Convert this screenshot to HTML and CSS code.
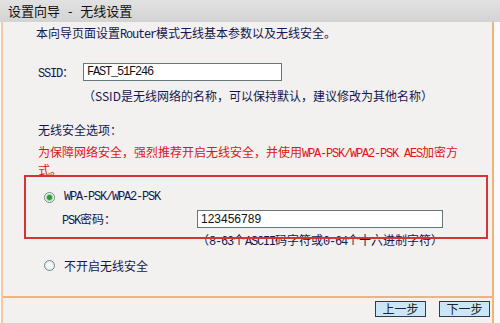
FILE: index.html
```html
<!DOCTYPE html>
<html>
<head>
  <meta charset="utf-8">
  <title>设置向导 - 无线设置</title>
  <link rel="stylesheet" href="styles.css">
</head>
<body>
  <div class="titlebar">设置向导 - 无线设置</div>

  <div class="panel">
    <div class="panel-body">
      <p class="intro">本向导页面设置<span class="en">Router</span>模式无线基本参数以及无线安全。</p>

      <div class="field-row">
        <label class="field-label ssid-label"><span class="en">SSID</span>：</label>
        <input class="text-input ssid-input" type="text" value="FAST_51F246">
      </div>
      <p class="hint ssid-hint">（SSID是无线网络的名称，可以保持默认，建议修改为其他名称）</p>

      <p class="section-title">无线安全选项：</p>
      <p class="warning">为保障网络安全，强烈推荐开启无线安全，并使用<span class="en">WPA-PSK/WPA2-PSK AES</span>加密方<span class="warning-end">式。</span></p>

      <label class="radio-row">
        <input type="radio" name="security" checked>
        <span class="en">WPA-PSK/WPA2-PSK</span>
      </label>
      <div class="field-row psk-row">
        <label class="field-label psk-label"><span class="en">PSK</span>密码：</label>
        <input class="text-input psk-input" type="text" value="123456789">
      </div>
      <p class="hint psk-hint">（<span class="en">8-63</span>个<span class="en">ASCII</span>码字符或<span class="en">0-64</span>个十六进制字符）</p>

      <label class="radio-row radio-off">
        <input type="radio" name="security">
        <span>不开启无线安全</span>
      </label>

      <!-- red annotation frame drawn over the WPA option -->
      <div class="highlight-box"></div>
    </div>

    <div class="panel-footer">
      <button class="step-btn" type="button">上一步</button>
      <button class="step-btn" type="button">下一步</button>
    </div>
  </div>
</body>
</html>
```

FILE: styles.css
```css
* {
  margin: 0;
  padding: 0;
  box-sizing: border-box;
}

body {
  width: 500px;
  background: #fafafa;
  font-family: "Noto Sans CJK SC", sans-serif;
  font-size: 12px;
  color: #16164e;
}

.en {
  font-family: "Liberation Mono", "Noto Sans CJK SC", monospace;
  letter-spacing: -1.2px;
}

.titlebar {
  height: 22px;
  padding-left: 8px;
  background: linear-gradient(#e2e2e2, #d3d3d3);
  font-size: 13px;
  line-height: 22px;
  word-spacing: 5px;
  color: #111;
}

.panel {
  width: 493px;
  margin-left: 1px;
  background: #f2f1f0;
  border-left: 2px solid #f6caa0;
  border-right: 2px solid #f0b47a;
}

.panel-body {
  position: relative;
  padding: 3px 0 23px 0;
}

.intro {
  margin-left: 33px;
  height: 16px;
  line-height: 16px;
}

.field-row {
  display: flex;
  align-items: center;
  height: 18px;
  margin-top: 22px;
}

.field-label {
  margin-left: 35px;
  width: 45px;
}

.text-input {
  height: 18px;
  padding: 0 3px;
  border: 1px solid #66777a;
  background: #fff;
  font-size: 12px;
  color: #111;
  outline: none;
}

.ssid-input {
  width: 199px;
  font-family: "Liberation Mono", monospace;
  letter-spacing: -1.2px;
}

.hint {
  height: 16px;
  line-height: 16px;
}

.ssid-hint {
  margin: 7px 0 0 80px;
}

.section-title {
  margin: 18px 0 0 35px;
  height: 16px;
  line-height: 16px;
}

.warning {
  width: 424px;
  height: 32px;
  margin: 6px 0 0 35px;
  line-height: 16px;
  color: #e01414;
}

.radio-row {
  display: flex;
  align-items: center;
  gap: 9px;
  height: 16px;
  margin: 13px 0 0 41px;
}

.radio-row input {
  appearance: none;
  width: 11px;
  height: 11px;
  margin: 0;
  border: 1px solid #6e8c90;
  border-radius: 50%;
  background: radial-gradient(circle, #ffffff 0, #e4eaea 5px);
}

.radio-row input:checked {
  background: radial-gradient(circle, #2e9a2e 0 2px, #9ad69a 3px, #f6faf6 4px);
}

.radio-off {
  margin-top: 9px;
}

.psk-row {
  margin-top: 5px;
}

.psk-label {
  margin-left: 59px;
  width: 135px;
}

.psk-input {
  width: 246px;
  font-family: "Liberation Sans", Arial, sans-serif;
}

.psk-hint {
  margin: 4px 0 0 194px;
}

.highlight-box {
  position: absolute;
  left: 21px;
  top: 153px;
  width: 464px;
  height: 64px;
  border: 2px solid #d43434;
  pointer-events: none;
}

.panel-footer {
  display: flex;
  justify-content: flex-end;
  gap: 13px;
  padding: 3px 2px 6px 0;
  border-top: 2px solid #f0b47a;
}

.step-btn {
  width: 51px;
  height: 16px;
  background: #cbe6f6;
  border: 1px solid #2d3d4d;
  font-family: "Noto Sans CJK SC", sans-serif;
  font-size: 12px;
  line-height: 14px;
  color: #222;
}
```
